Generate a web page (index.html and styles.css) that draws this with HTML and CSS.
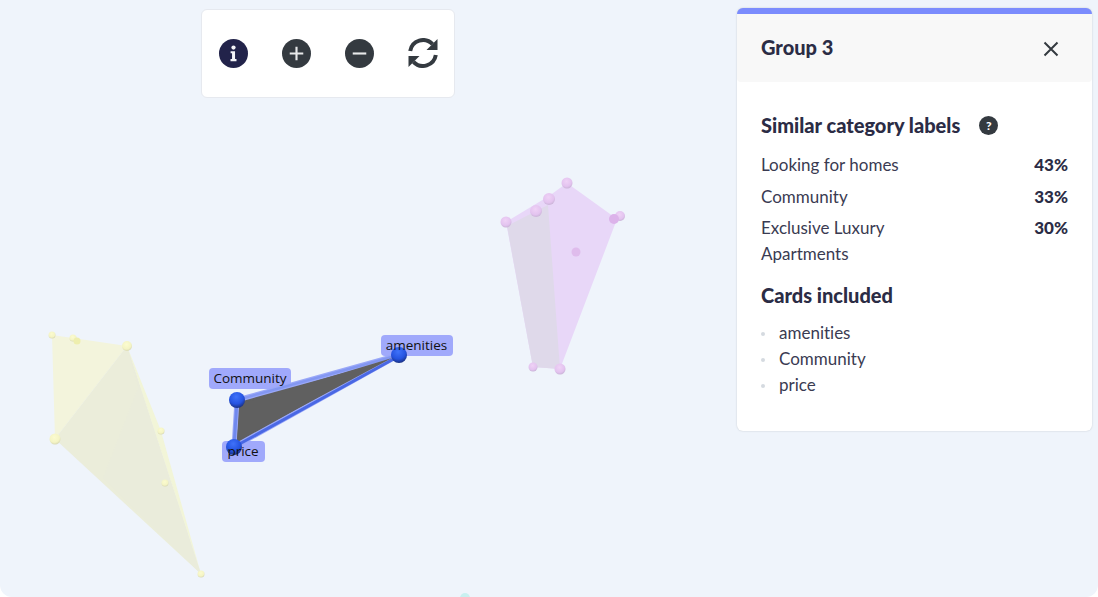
FILE: index.html
```html
<!DOCTYPE html>
<html lang="en">
<head>
    <meta charset="UTF-8">
    <meta name="viewport" content="width=device-width, initial-scale=1.0">
    <title>Group explorer</title>
    <link rel="stylesheet" href="styles.css">
</head>
<body>
    <div class="stage">
        <!-- 3D scene, drawn flat -->
        <svg class="scene" viewBox="0 0 1098 597" width="1098" height="597">
            <defs>
                <radialGradient id="ball-yellow" cx="45%" cy="35%" r="70%">
                    <stop offset="0%" stop-color="#fbfbd0"/>
                    <stop offset="65%" stop-color="#f4f4c4"/>
                    <stop offset="100%" stop-color="#d2d2b0"/>
                </radialGradient>
                <radialGradient id="ball-purple" cx="45%" cy="35%" r="70%">
                    <stop offset="0%" stop-color="#efd2f6"/>
                    <stop offset="65%" stop-color="#e3c3ef"/>
                    <stop offset="100%" stop-color="#c4b0d2"/>
                </radialGradient>
                <radialGradient id="ball-blue" cx="45%" cy="30%" r="75%">
                    <stop offset="0%" stop-color="#3f72fa"/>
                    <stop offset="60%" stop-color="#2553e0"/>
                    <stop offset="100%" stop-color="#182a70"/>
                </radialGradient>
            </defs>

            <!-- yellow group -->
            <polygon points="52,335 127,346 55,439" fill="#f3f4dc"/>
            <polygon points="127,346 55,439 201,574" fill="#ebedda"/>
            <polygon points="127,346 161,431 201,574" fill="#f2f5d8"/>
            <polygon points="138,388 103,478 201,574 127,346" fill="#eaecdb"/>
            <circle cx="52" cy="335" r="3.5" fill="url(#ball-yellow)"/>
            <circle cx="73" cy="338" r="3.5" fill="url(#ball-yellow)"/>
            <circle cx="77" cy="341" r="3.5" fill="#eeeeae"/>
            <circle cx="127" cy="346" r="5" fill="url(#ball-yellow)"/>
            <circle cx="161" cy="431" r="3.5" fill="url(#ball-yellow)"/>
            <circle cx="165" cy="483" r="3.5" fill="url(#ball-yellow)"/>
            <circle cx="55" cy="439" r="5.5" fill="url(#ball-yellow)"/>
            <circle cx="201" cy="574" r="3.5" fill="url(#ball-yellow)"/>

            <!-- purple group -->
            <polygon points="506,222 549,196 567,183 617,219 560,369 533,367" fill="#e8d7f8"/>
            <polygon points="507,226 548,205 560,369 533,367" fill="#dfd9ea"/>
            <circle cx="506" cy="222" r="5.5" fill="url(#ball-purple)"/>
            <circle cx="536" cy="211" r="6" fill="url(#ball-purple)"/>
            <circle cx="549" cy="199" r="6" fill="url(#ball-purple)"/>
            <circle cx="567" cy="183" r="5.5" fill="url(#ball-purple)"/>
            <circle cx="620" cy="216" r="5" fill="url(#ball-purple)"/>
            <circle cx="614" cy="219" r="5" fill="#dcb3ea"/>
            <circle cx="576" cy="252" r="4.5" fill="#dfbcec"/>
            <circle cx="533" cy="367" r="4.5" fill="url(#ball-purple)"/>
            <circle cx="560" cy="369" r="5.5" fill="url(#ball-purple)"/>

            <!-- teal group, mostly off the bottom edge -->
            <circle cx="465" cy="598" r="5" fill="#c9f0f0"/>

            <!-- selected group -->
            <rect class="node-label" x="209" y="368" width="82" height="21" rx="4"/>
            <rect class="node-label" x="381" y="335" width="72" height="21" rx="4"/>
            <rect class="node-label" x="222" y="441" width="43" height="21" rx="4"/>
            <polygon points="237,400 399,355 234,447" fill="#606060" stroke="#9aa8f8" stroke-width="5" stroke-linejoin="round"/>
            <path d="M399 356L234 447" stroke="#4a68e4" stroke-width="3" fill="none"/>
            <path d="M237 400L234 447" stroke="#6f88ee" stroke-width="3" fill="none"/>
            <path d="M237 400L399 355" stroke="#8397f2" stroke-width="2.5" fill="none"/>
            <polygon points="240,404 392,358 237,441" fill="#606060"/>
            <circle cx="237" cy="400" r="8" fill="url(#ball-blue)"/>
            <circle cx="399" cy="355" r="8" fill="url(#ball-blue)"/>
            <circle cx="234" cy="447" r="8" fill="url(#ball-blue)"/>
            <text class="node-text" x="250" y="382.5" text-anchor="middle">Community</text>
            <text class="node-text" x="416.5" y="349.5" text-anchor="middle">amenities</text>
            <text class="node-text" x="243" y="455.5" text-anchor="middle">price</text>
        </svg>

        <div class="toolbar">
            <svg class="tool-icon" viewBox="0 0 30 30">
                <circle cx="15" cy="15" r="15" fill="#22234a"/>
                <circle cx="15" cy="8.8" r="2.2" fill="#f4f4f8"/>
                <path d="M12 12.6h4.6v8.2h1.5v2.2h-6.2v-2.2h1.6v-6h-1.5z" fill="#f4f4f8"/>
            </svg>
            <svg class="tool-icon" viewBox="0 0 30 30">
                <circle cx="15" cy="15" r="15" fill="#343a40"/>
                <path d="M15 8v14M8 15h14" stroke="#e8e9ea" stroke-width="2.2" fill="none"/>
            </svg>
            <svg class="tool-icon" viewBox="0 0 30 30">
                <circle cx="15" cy="15" r="15" fill="#343a40"/>
                <path d="M8 15h14" stroke="#e8e9ea" stroke-width="2.2" fill="none"/>
            </svg>
            <svg class="tool-icon" viewBox="0 0 30 30">
                <path d="M2.2 13A13 13 0 0 1 24.5 6.2" stroke="#343a40" stroke-width="4" fill="none"/>
                <path d="M29.5 1V12H18.5z" fill="#343a40"/>
                <g transform="rotate(180 15 15)">
                    <path d="M2.2 13A13 13 0 0 1 24.5 6.2" stroke="#343a40" stroke-width="4" fill="none"/>
                    <path d="M29.5 1V12H18.5z" fill="#343a40"/>
                </g>
            </svg>
        </div>

        <aside class="panel">
            <div class="panel-header">
                <h2 class="panel-title">Group 3</h2>
                <svg class="close-icon" viewBox="0 0 16 16">
                    <path d="M1.5 1.5l13 13M14.5 1.5l-13 13" stroke="#343a40" stroke-width="2" fill="none"/>
                </svg>
            </div>
            <div class="panel-body">
                <h3 class="section-title">
                    Similar category labels
                    <span class="help-badge">?</span>
                </h3>
                <div class="label-row">
                    <span class="label-name">Looking for homes</span>
                    <span class="label-score">43%</span>
                </div>
                <div class="label-row">
                    <span class="label-name">Community</span>
                    <span class="label-score">33%</span>
                </div>
                <div class="label-row">
                    <span class="label-name">Exclusive Luxury Apartments</span>
                    <span class="label-score">30%</span>
                </div>
                <h3 class="section-title cards-title">Cards included</h3>
                <ul class="card-list">
                    <li>amenities</li>
                    <li>Community</li>
                    <li>price</li>
                </ul>
            </div>
        </aside>
    </div>
</body>
</html>
```

FILE: styles.css
```css
* {
    margin: 0;
    padding: 0;
    box-sizing: border-box;
    font-family: 'Lato', 'Open Sans', sans-serif;
    font-variant-ligatures: none;
}

body {
    background-color: #fff;
    color: #2b2c45;
}

.stage {
    position: relative;
    height: 597px;
    background-color: #eff4fb;
    border-radius: 0 0 12px 12px;
    overflow: hidden;
}

.scene {
    position: absolute;
    top: 0;
    left: 0;
}

.node-label {
    fill: #a0a9fb;
}

.node-text {
    font-family: 'Open Sans', sans-serif;
    font-size: 13.5px;
    fill: #111;
}

.toolbar {
    position: absolute;
    top: 9px;
    left: 201px;
    width: 254px;
    height: 89px;
    display: flex;
    align-items: center;
    gap: 34px;
    padding: 0 0 1px 17px;
    background-color: #fff;
    border: 1px solid #e6e9ef;
    border-radius: 6px;
}

.tool-icon {
    width: 29px;
    height: 29px;
    flex-shrink: 0;
}

.tool-icon:last-child {
    width: 30px;
    height: 30px;
}

.panel {
    position: absolute;
    top: 8px;
    left: 737px;
    width: 355px;
    height: 423px;
    background-color: #fff;
    border-top: 6px solid #7b8cfd;
    border-radius: 6px;
    box-shadow: 0 0 2px rgba(0, 0, 0, 0.18);
}

.panel-header {
    height: 68px;
    display: flex;
    align-items: center;
    justify-content: space-between;
    padding: 0 33px 0 24px;
    background-color: #f8f8f8;
    border-radius: 0 0 4px 4px;
}

.panel-title {
    font-size: 20px;
    font-weight: 900;
    color: #2b2c45;
    margin-bottom: 2px;
}

.close-icon {
    width: 16px;
    height: 16px;
    margin-top: 2px;
}

.panel-body {
    padding: 30px 24px 0;
}

.section-title {
    display: flex;
    align-items: center;
    gap: 19px;
    font-size: 20px;
    font-weight: 900;
    line-height: 26px;
    margin-bottom: 14px;
}

.help-badge {
    width: 19px;
    height: 19px;
    border-radius: 50%;
    background-color: #343a40;
    color: #fff;
    font-size: 12px;
    font-weight: 900;
    line-height: 19px;
    text-align: center;
}

.label-row {
    display: flex;
    justify-content: space-between;
    align-items: flex-start;
    font-size: 17px;
    line-height: 26px;
    margin-bottom: 5.5px;
    color: #3a3b52;
}

.label-name {
    width: 150px;
}

.label-score {
    font-weight: 900;
    color: #2b2c45;
}

.cards-title {
    margin-top: 15px;
    margin-bottom: 12px;
}

.card-list {
    list-style: none;
    color: #3a3b52;
}

.card-list li {
    position: relative;
    padding-left: 18px;
    font-size: 17px;
    line-height: 26px;
}

.card-list li::before {
    content: "";
    position: absolute;
    left: 0;
    top: 12px;
    width: 4px;
    height: 4px;
    border-radius: 50%;
    background-color: #d5dae0;
}
```
